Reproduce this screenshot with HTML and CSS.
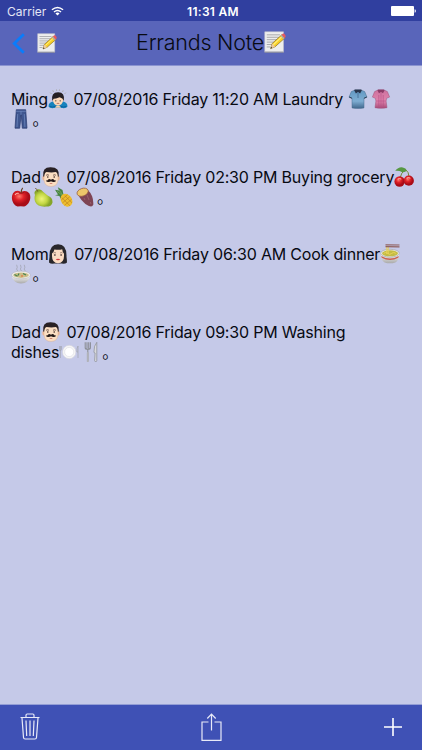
FILE: index.html
```html
<!DOCTYPE html>
<html lang="en">
<head>
    <meta charset="UTF-8">
    <meta name="viewport" content="width=device-width, initial-scale=1.0">
    <title>Errands Note</title>
    <link rel="stylesheet" href="styles.css">
</head>
<body>

    <!-- Shared icons -->
    <svg class="sprite" width="0" height="0">
        <defs>
            <linearGradient id="blue-shirt" x2="0" y2="1"><stop stop-color="#6299c4"/><stop offset=".6" stop-color="#7eadd2"/><stop offset="1" stop-color="#41678d"/></linearGradient>
            <linearGradient id="pink-shirt" x2="0" y2="1"><stop stop-color="#ce729f"/><stop offset=".6" stop-color="#e084ad"/><stop offset="1" stop-color="#a84c79"/></linearGradient>
            <radialGradient id="red" cx=".4" cy=".35"><stop stop-color="#ff786b"/><stop offset=".5" stop-color="#df2027"/><stop offset="1" stop-color="#a90c17"/></radialGradient>
            <radialGradient id="green" cx=".4" cy=".55"><stop stop-color="#eef47b"/><stop offset=".6" stop-color="#c3d744"/><stop offset="1" stop-color="#86a529"/></radialGradient>
            <linearGradient id="bowl" x2="0" y2="1"><stop stop-color="#fff"/><stop offset="1" stop-color="#aaa"/></linearGradient>
        </defs>
        <symbol id="memo" viewBox="0 0 20 20">
            <path d="M.7.7h17v18.6H.7z" fill="#ededed" stroke="#c8c8cd" stroke-width=".5"/>
            <path d="M.7 19.2h17" stroke="#77798b" stroke-width=".8"/>
            <path d="M2.5 3.5h12M2.5 5.7h11M2.5 7.9h9M2.5 10.1h7M2.5 12.3h5M2.5 14.5h3" stroke="#a0a0a4" stroke-width=".8"/>
            <path d="M6 16l1.4-4.6 8.8-8 2.7 3-8.8 7.9z" fill="#f8cf28" stroke="#80651e" stroke-width=".6"/>
            <path d="M8.5 12.5l8.5-8" stroke="#fff07b" stroke-width="1"/>
            <path d="M6 16l1.4-4.6 2.7 2.9z" fill="#edcaa0"/><path d="M6 16l.5-1.8 1 1.2z" fill="#333"/>
            <path d="M15.1 4.4l1-1 2.7 3-1.1 1z" fill="#aaa"/>
            <path d="M16 3.4l1-.9q1-.6 2 .6t.7 2.2l-.9 1.1z" fill="#e85961"/>
        </symbol>
        <symbol id="bow" viewBox="0 0 20 20">
            <path d="M3.5 5L2.2 3.6M5.5 3L4.8 1.3M8.7 2L8.5.4M11.3 2l.2-1.6M14.5 3l.7-1.7M16.5 5l1.3-1.4" stroke="#aaa" stroke-width=".9"/>
            <path d="M.5 17.5q0-4.5 5.1-5.3h8.8q5.1.8 5.1 5.3-1 2-5 1.6h-9Q1.5 19.4.5 17.5z" fill="#1682bd"/>
            <path d="M1.6 17.4q3 1.4 6-.2M18.4 17.4q-3 1.4-6-.2" fill="none" stroke="#0b609d" stroke-width="1"/>
            <ellipse cx="10" cy="11" rx="5.1" ry="5.8" fill="#fbd8b9"/>
            <path d="M4.2 12Q2.8 3.5 10 3.3t5.8 8.7l-1.5-2.4-2.7-1.3-3.6 1.3-2.3.2z" fill="#251f22"/>
            <circle cx="7.8" cy="11.8" r=".65" fill="#382922"/><circle cx="12.2" cy="11.8" r=".65" fill="#382922"/>
            <path d="M8.7 14.6q1.3-.7 2.6 0" fill="none" stroke="#a34c40" stroke-width=".7"/>
            <path d="M7 18.8q.5-2 3-2t3 2z" fill="#fbd0ae"/>
        </symbol>
        <symbol id="man" viewBox="0 0 20 20">
            <ellipse cx="2.8" cy="11" rx="1.5" ry="2.5" fill="#edb998"/><ellipse cx="17.2" cy="11" rx="1.5" ry="2.5" fill="#edb998"/>
            <path d="M3 7q0-5.5 7-5.5T17 7v5.5q-.3 7-7 7t-7-7z" fill="#fbdec2" stroke="#d2a98f" stroke-width=".4"/>
            <path d="M2.2 9.5Q1 .3 9.3.3 19 .1 17.8 9.5l-.9.2q-.2-4-2.2-4.7-4 .8-9.2 0Q3.5 5.8 3.1 9.7z" fill="#292124"/>
            <path d="M5.2 8.2q1.4-.8 2.7 0m4.2 0q1.4-.8 2.7 0" fill="none" stroke="#46302a" stroke-width=".8"/>
            <circle cx="6.8" cy="10" r=".8" fill="#38241f"/><circle cx="13.2" cy="10" r=".8" fill="#38241f"/>
            <path d="M10 12.7q-2-1.6-3.2.2-1 .9-2 .5.8 1.9 2.8 1.7 1.5 0 2.4-.8.9.8 2.4.8 2 .2 2.8-1.7-1 .4-2-.5-1.2-1.8-3.2-.2z" fill="#241917"/>
            <path d="M8.2 16q1.8 1.4 3.6 0z" fill="#b95247"/>
        </symbol>
        <symbol id="woman" viewBox="0 0 20 20">
            <path d="M1.2 18.8q-.4-1 .3-6Q1.1.4 10 .3t8.5 12.5q.7 5 .3 6-1.6 1.2-5 .8H6.2q-3.4.4-5-.8z" fill="#29272b"/>
            <path d="M4 9.5q1.8-1 2.4-4 5 .8 7.8-.3.3 3.2 1.8 4.5V12q0 6.9-6 7.3Q4 18.9 4 12z" fill="#fbdcc3"/>
            <path d="M5.4 9q1.3-.8 2.6 0m4 0q1.3-.8 2.6 0" fill="none" stroke="#674942" stroke-width=".6"/>
            <ellipse cx="6.9" cy="11" rx="1" ry=".8" fill="#41302e"/><ellipse cx="13.1" cy="11" rx="1" ry=".8" fill="#41302e"/>
            <path d="M7.7 15.3l1.6-.6.7.3.7-.3 1.6.6q-2.3 2.1-4.6 0z" fill="#d53c43"/>
        </symbol>
        <symbol id="shirt-blue" viewBox="0 0 20 20">
            <path d="M6.5 1.2L3.3 2.6 1 8.2l3 1.4v9.3q6 1 12 0V9.6l3-1.4-2.3-5.6-3.2-1.4z" fill="url(#blue-shirt)" stroke="#4b6f91" stroke-width=".5"/>
            <path d="M6.1 1.3l.8-.8h6.2l.8.8-1.8 3.2L10 3l-2.1 1.5z" fill="#29354c"/>
            <path d="M1.1 7.9l3 1.4M18.9 7.9l-3 1.4" stroke="#29354c" stroke-width=".9"/>
            <path d="M10 4v5" stroke="#41678d" stroke-width=".8"/>
        </symbol>
        <symbol id="shirt-pink" viewBox="0 0 20 20">
            <path d="M6.5 1.2L3.6 2.6 1.4 8.1l3 1.2.5 2.8-.9 6.6q6 1.2 12 0l-.9-6.6.5-2.8 3-1.2-2.2-5.5-2.9-1.4z" fill="url(#pink-shirt)" stroke="#9f5078" stroke-width=".5"/>
            <path d="M6.4 1.3l.8-.8h5.6l.8.8-1.6 3L10 3 8 4.3z" fill="#8d3c68"/>
            <path d="M10 4v14.8M7.8 6v12.6M12.2 6v12.6M5.3 12h9.4" stroke="#b54e83" stroke-width=".6"/>
        </symbol>
        <symbol id="jeans" viewBox="0 0 20 20">
            <path d="M5.3.7h9.4l1.3 18.5h-4.7L10.2 5.4 8.7 19.2H4z" fill="#405790" stroke="#293b70" stroke-width=".7"/>
            <path d="M5.2 2.3h9.6M10 2v4M6.7 5L6 18M13.3 5l.6 13" fill="none" stroke="#6c85bb" stroke-width=".8"/>
        </symbol>
        <symbol id="cherries" viewBox="0 0 20 20">
            <path d="M11.5 2.5Q7 5.5 6 11M11.5 2.5q3.4 2.5 3.5 7" fill="none" stroke="#718b35" stroke-width="1"/>
            <path d="M1.2 3.8Q4.5-.4 8.8.4q3.1.3 4 3.2-2 2.2-5 1.4Q5 3.3 1.2 3.8z" fill="#579842"/>
            <circle cx="5.6" cy="14.5" r="5.2" fill="url(#red)"/><circle cx="14.8" cy="13.7" r="5.1" fill="url(#red)"/>
            <path d="M3.7 12.2q1.8-1.3 3.6-.1M12.7 11.2q1.8-1.2 3.7 0" fill="none" stroke="#ffc3b5" stroke-width=".9"/>
        </symbol>
        <symbol id="apple" viewBox="0 0 20 20">
            <path d="M10 5Q5.2 2.2 2 6.2C-1 11.5 2.6 19 6.5 19.5q3.1-.7 6.4 0c4-.5 8.5-8 5.4-13.2Q14.8 2.5 10 5z" fill="url(#red)"/>
            <path d="M7.3 5.5q3 1.8 5.7 0" fill="none" stroke="#97151c"/><path d="M10.2 5.8Q10 2.8 11.7.8" fill="none" stroke="#604022" stroke-width="1.1"/>
            <path d="M4 7.8q1.5-2 3.7-1.4" fill="none" stroke="#ffb2a5" stroke-width="1.2"/>
        </symbol>
        <symbol id="pear" viewBox="0 0 20 20">
            <path d="M2.4 3.7Q6.8.4 10.4 5l4.2 3.6q5.2 2.2 4.9 6.8-.8 4.2-6.5 4.2-8.4.5-10.7-4.6Q.9 11.6 2 8 .8 5.2 2.4 3.7z" fill="url(#green)"/>
            <path d="M4.7 4.5Q4 2.2 2.3 1" fill="none" stroke="#735a2b" stroke-width="1"/>
        </symbol>
        <symbol id="pineapple" viewBox="0 0 20 20">
            <path d="M1 2.8l4 .8L3.8.3l4.7 2.8.8 3.7 1.6 1.4-4.2 3.5-1.3-2.6L1 8.2l3-.8z" fill="#468341"/>
            <path d="M3 4.4l6 4.4M5 2.8l3.6 5" stroke="#79a962" stroke-width=".8"/>
            <ellipse cx="12.5" cy="13.2" rx="5.4" ry="6.9" transform="rotate(-35 12.5 13.2)" fill="#edbd2e"/>
            <path d="M7.3 13l6.3-5.4M8.4 16l7.4-6.3M10.4 18.4l7.1-6M7.7 10.5l8.3 8.3M10.7 8.5l7.3 7.3" stroke="#b77b1e" stroke-width=".6"/>
        </symbol>
        <symbol id="potato" viewBox="0 0 20 20">
            <path d="M1.5 5.2Q5-.2 11.8 3.1q5.8 5.4 5.5 14.1-.6 3.3-4.4 1.8Q4.2 14.6 1.5 5.2z" fill="#7e4454"/>
            <ellipse cx="6.6" cy="5.2" rx="5.8" ry="3.8" transform="rotate(-20 6.6 5.2)" fill="#edc76a" stroke="#985d43" stroke-width=".7"/>
            <path d="M11 8l2 5M8 11l1 2M14.3 15l.7 2" stroke="#a26a74" stroke-width=".7"/>
        </symbol>
        <symbol id="noodles" viewBox="0 0 20 20">
            <path d="M.8 8.8Q1 19 7.2 19.3h5.6Q19 19 19.2 8.8z" fill="url(#bowl)"/>
            <path d="M1.2 12q8.8 5 17.6 0l-.5 1.7q-8.3 4.8-16.6 0z" fill="#cc5f52"/>
            <ellipse cx="10" cy="9.2" rx="9.3" ry="3.9" fill="#eee" stroke="#999" stroke-width=".6"/>
            <ellipse cx="10" cy="9.3" rx="8" ry="3" fill="#c3bc45"/>
            <path d="M3.7 9.4q2-2 4 0t4 0 4 0M6.8 2.5v7.5M8.2 2.5V10" fill="none" stroke="#ead35a" stroke-width="1"/>
            <path d="M5.5.8l14 .2M5.5 2.6l14 .3" stroke="#90605f" stroke-width="1.2"/>
        </symbol>
        <symbol id="soup" viewBox="0 0 20 20">
            <path d="M6.7 7Q4.6 5 6.3 3.3L5.6.8M10.5 7Q8.4 5 10.1 3.3L9.4.8M14.3 7q-2.1-2-.4-3.7L13.2.8" fill="none" stroke="#a2a5b4" stroke-width=".8"/>
            <path d="M.8 11.3q.7 5.8 5.7 7.7 3.5.9 7 0 5-1.9 5.7-7.7z" fill="url(#bowl)"/>
            <ellipse cx="10" cy="11" rx="9.4" ry="3.8" fill="#f4f4f4" stroke="#aaa" stroke-width=".5"/>
            <ellipse cx="10" cy="11.2" rx="7.8" ry="2.7" fill="#cbbd87"/>
            <path d="M3.5 10.5l3 1.7M8 9.5l-1 2M12 9.5l3 1.5" stroke="#448352" stroke-width="1.2"/><circle cx="11" cy="12" r="1" fill="#dc8551"/>
        </symbol>
        <symbol id="plate" viewBox="0 0 20 20">
            <circle cx="10.2" cy="10" r="6.7" fill="#f6f6f6" stroke="#d1d2dc" stroke-width=".6"/>
            <circle cx="10.2" cy="10" r="4.6" fill="#fff" stroke="#dedee3" stroke-width=".6"/>
            <path d="M.4 4v3.5q0 1 1 1t1-1V4M1.4 4v12M19 16V4q-1.4 2-1.1 6H19" fill="none" stroke="#a0a3ad" stroke-width=".7"/>
        </symbol>
        <symbol id="cutlery" viewBox="0 0 20 20">
            <path d="M4.2.3v5.5q0 1.7 2.6 1.7t2.6-1.7V.3M6 .3v6.5M7.7.3v6.5M6.8 7v12" fill="none" stroke="#8c8f97" stroke-width="1.1"/>
            <path d="M6.8 11v8.2" stroke="#b0b2b9" stroke-width="2" stroke-linecap="round"/>
            <path d="M15.8.3v18.3q0 1-1.1 1t-1.1-1l.5-7.6-1.2-.6q-.1-7 2.9-10.1z" fill="#d9dadd" stroke="#898c94" stroke-width=".7"/>
        </symbol>
    </svg>

    <div class="app">
        <div class="status-bar">
            <div class="carrier">
                <span>Carrier</span>
                <svg class="wifi" viewBox="0 0 14 10">
                    <path d="M1 3.7q6-5.1 12 0M3.2 6q3.8-3.2 7.6 0" fill="none" stroke="#fff" stroke-width="1.5"/>
                    <path d="M4.8 7.6q2.2-1.8 4.4 0L7 9.8z" fill="#fff"/>
                </svg>
            </div>
            <div class="time">11:31 AM</div>
            <svg class="battery" viewBox="0 0 25 10">
                <rect width="23" height="10" rx="1" fill="#fff"/><path d="M23.6 3.3q1.3.2 1.3 1.7t-1.3 1.7z" fill="#fff"/>
            </svg>
        </div>

        <div class="nav-bar">
            <div class="back">
                <svg class="chevron" viewBox="0 0 13 21"><path d="M11.8 1.2L2.2 10.5l9.6 9.3" fill="none" stroke="#0a7cfb" stroke-width="2.8"/></svg>
                <svg class="memo"><use href="#memo"/></svg>
            </div>
            <h1>Errands Note<svg class="memo"><use href="#memo"/></svg></h1>
        </div>

        <ul class="notes">
            <li>Ming<svg><use href="#bow"/></svg> <span>07/08/2016 Friday 11:20 AM Laundry</span> <svg class="shirt"><use href="#shirt-blue"/></svg><svg class="shirt"><use href="#shirt-pink"/></svg><br><svg><use href="#jeans"/></svg>。</li>
            <li>Dad<svg><use href="#man"/></svg> <span>07/08/2016 Friday 02:30 PM Buying grocery</span><svg><use href="#cherries"/></svg><br><svg><use href="#apple"/></svg><svg><use href="#pear"/></svg><svg><use href="#pineapple"/></svg><svg><use href="#potato"/></svg>。</li>
            <li>Mom<svg><use href="#woman"/></svg> <span>07/08/2016 Friday 06:30 AM Cook dinner</span><svg><use href="#noodles"/></svg><br><svg><use href="#soup"/></svg>。</li>
            <li>Dad<svg><use href="#man"/></svg> <span>07/08/2016 Friday 09:30 PM Washing</span><br>dishes<svg><use href="#plate"/></svg><svg><use href="#cutlery"/></svg>。</li>
        </ul>

        <div class="toolbar">
            <svg class="trash" viewBox="0 0 20 27">
                <path d="M.5 4.5h19M6 4V2.2Q6 1 7.2 1h5.6Q14 1 14 2.2V4M2 5l1.5 19.5q.1 1.5 1.6 1.5h9.8q1.5 0 1.6-1.5L18 5M6 7.5l.7 15.5M10 7.5V23M14 7.5L13.3 23"/>
            </svg>
            <svg class="share" viewBox="0 0 21 28">
                <path d="M7.5 9H1v18.3h19V9h-6.5M10.5 17.5V1.2M6.3 5.5l4.2-4.3 4.2 4.3"/>
            </svg>
            <svg class="plus" viewBox="0 0 18 18"><path d="M9 0v18M0 9h18"/></svg>
        </div>
    </div>

</body>
</html>
```
FILE: styles.css
```css
body {
    margin: 0;
    background-color: #c5c9e8;
    color: #080a12;
    font-family: Inter, "Noto Sans CJK SC", sans-serif;
}

.sprite {
    position: absolute;
}

.app {
    display: flex;
    flex-direction: column;
    height: 750px;
}

/* --- Status bar --- */
.status-bar {
    display: grid;
    grid-template-columns: 1fr auto 1fr;
    align-items: center;
    box-sizing: border-box;
    height: 21px;
    padding: 1px 6px 0 7px;
    background-color: #303f9f;
    color: #fff;
    font-size: 12px;
}

.carrier {
    display: flex;
    align-items: center;
    gap: 5px;
    color: #e4e6f5;
}

.wifi {
    width: 13px;
    height: 10px;
}

.time {
    padding-left: 3px;
    font-weight: 600;
    letter-spacing: 0.3px;
}

.battery {
    width: 25px;
    height: 10px;
    justify-self: end;
}

/* --- Navigation bar --- */
.nav-bar {
    display: grid;
    grid-template-columns: 1fr auto 1fr;
    align-items: center;
    box-sizing: border-box;
    height: 45px;
    padding: 0 12px;
    background-color: #5965ba;
    border-bottom: 1px solid #8b94d0;
}

.back {
    display: flex;
    align-items: center;
    gap: 12px;
}

.chevron {
    width: 13px;
    height: 21px;
}

.memo {
    width: 20px;
    height: 20px;
}

h1 {
    display: flex;
    align-items: center;
    margin: 0;
    padding-bottom: 3px;
    font-size: 21.5px;
    font-weight: 300;
    letter-spacing: -0.25px;
    white-space: nowrap;
}

h1 .memo {
    width: 22px;
    height: 22px;
}

/* --- Notes --- */
.notes {
    flex: 1;
    margin: 0;
    padding: 4px 0 0 11px;
    list-style: none;
    font-size: 16px;
    line-height: 20px;
    letter-spacing: -0.2px;
    white-space: nowrap;
}

.notes li {
    box-sizing: border-box;
    height: 77.7px;
    padding-top: 19px;
}

.notes svg {
    width: 20px;
    height: 20px;
    margin-right: 1.5px;
    vertical-align: top;
}

.notes .shirt {
    margin-left: 1px;
}

/* --- Bottom toolbar --- */
.toolbar {
    display: grid;
    grid-template-columns: 1fr auto 1fr;
    align-items: center;
    box-sizing: border-box;
    height: 46px;
    padding: 0 20px 2px;
    background-color: #3f51b5;
    border-top: 1px solid #939dd5;
}

.toolbar svg {
    fill: none;
    stroke: #e8eaf8;
    stroke-width: 1.2;
}

.trash {
    width: 20px;
    height: 27px;
}

.share {
    width: 21px;
    height: 28px;
}

.toolbar .plus {
    width: 18px;
    height: 18px;
    justify-self: end;
    stroke: #fff;
    stroke-width: 1.6;
}
```
